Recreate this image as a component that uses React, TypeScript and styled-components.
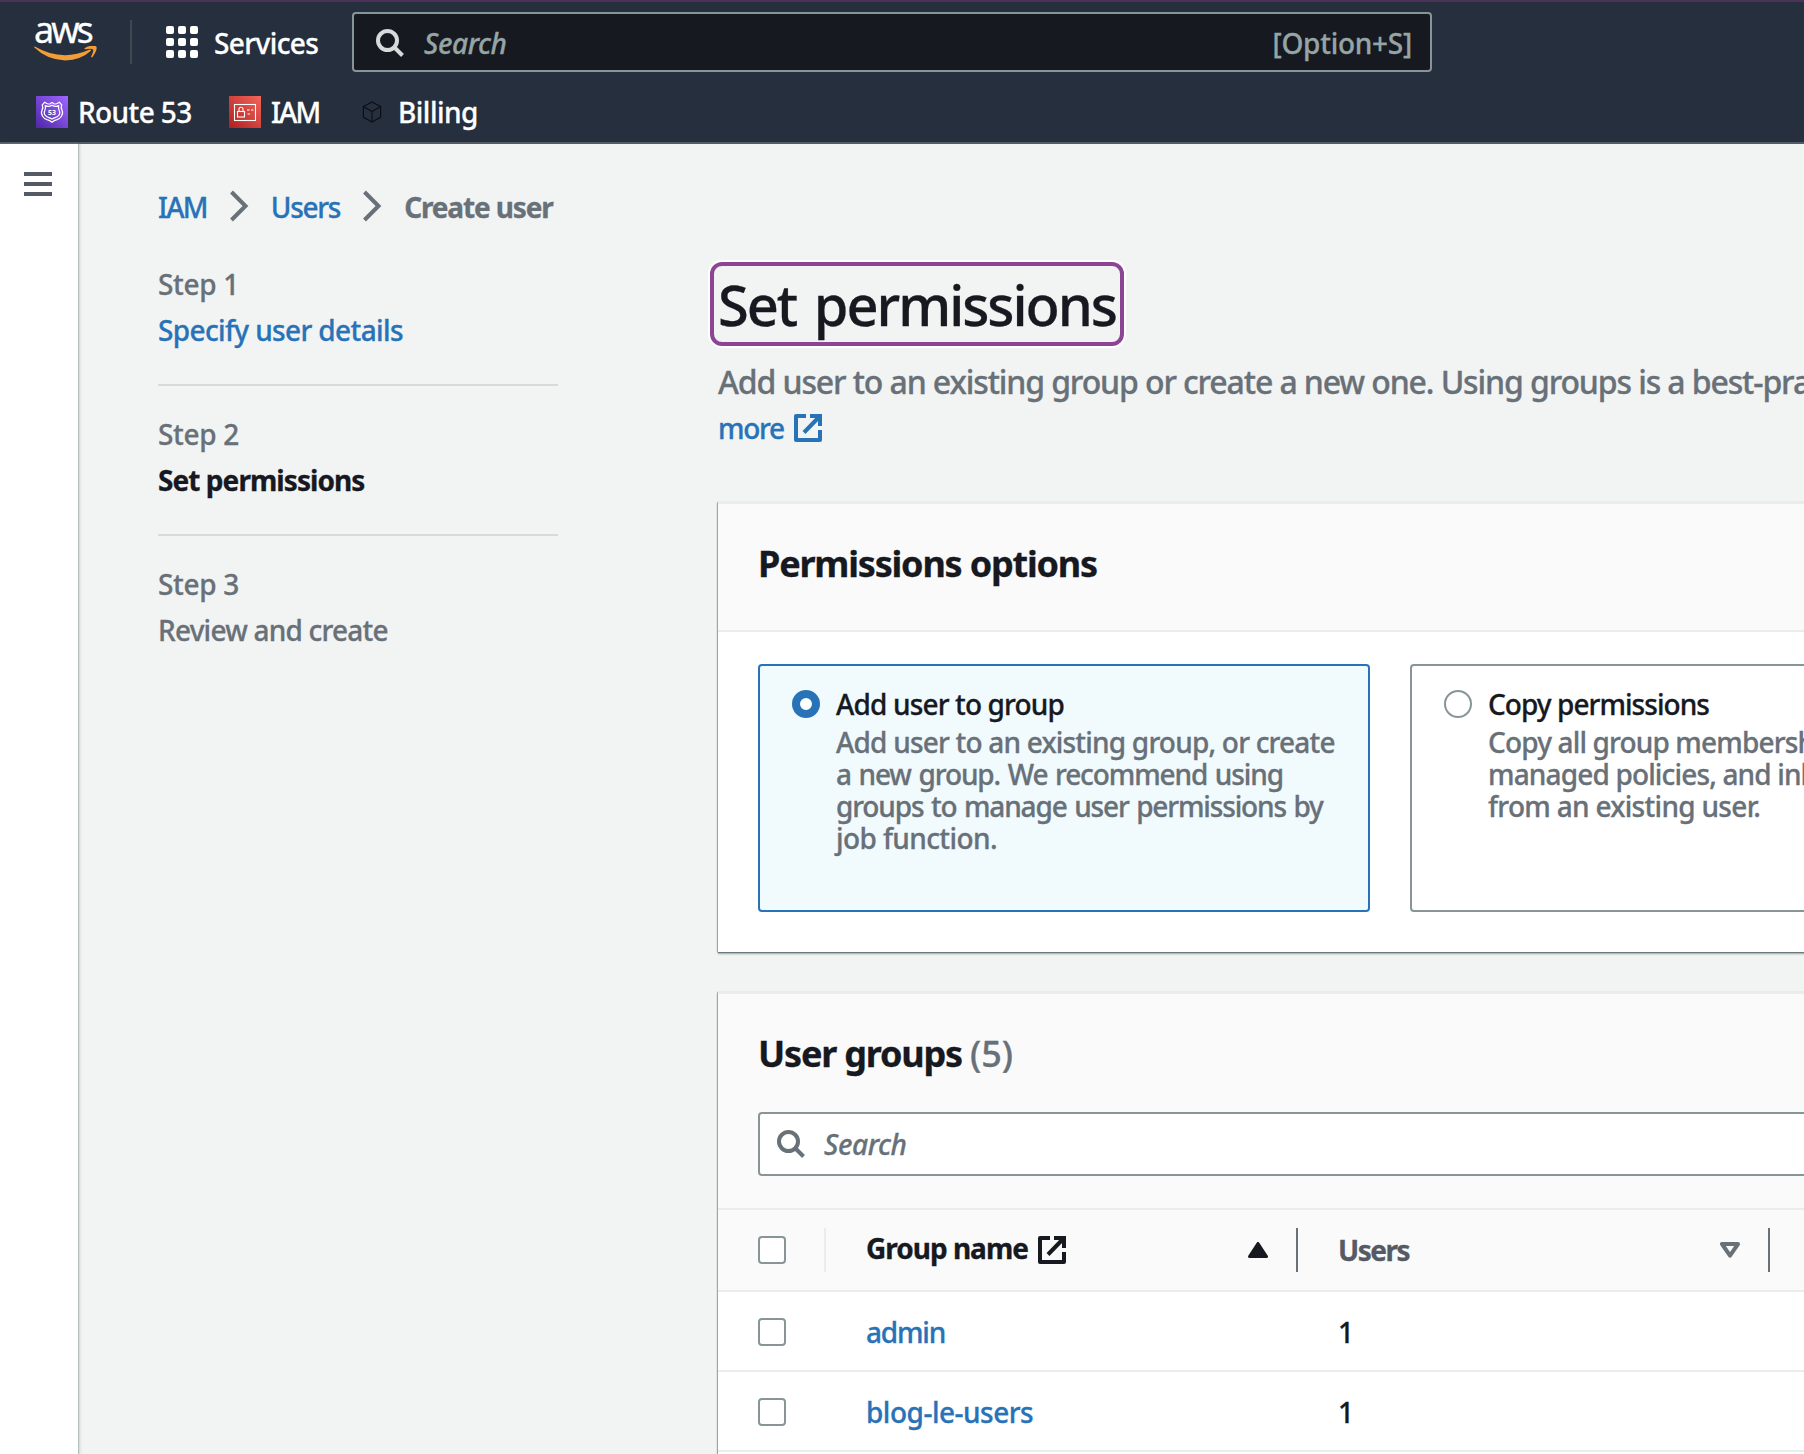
import React from "react";
import styled, { createGlobalStyle } from "styled-components";

const GlobalStyle = createGlobalStyle`
  *, *::before, *::after { box-sizing: border-box; }
  html, body { margin: 0; padding: 0; overflow: hidden; }
  body {
    font-family: "Noto Sans", "Open Sans", sans-serif;
    font-size: 28px;
    font-weight: 500;
    letter-spacing: -0.6px;
    -webkit-text-stroke-width: 0.3px;
    color: #16191f;
    background: #f2f3f3;
  }
  h1, h2, p, ol, ul { margin: 0; padding: 0; list-style: none; font-weight: inherit; }
`;

const Shell = styled.div`
  width: 1804px;
  height: 1454px;
  display: flex;
  flex-direction: column;
  overflow: hidden;
`;

/* Text run with its own tracking, in pixels. */
const Tracked = styled.span<{ $ls: number }>`
  letter-spacing: ${(p) => p.$ls}px;
`;

/* ---------- global navigation ---------- */

const Header = styled.header`
  flex: none;
  height: 144px;
  display: flex;
  flex-direction: column;
  background: #252f3e;
  color: #fff;
  border-top: 2px solid #4b305a;
  border-bottom: 2px solid #545b64;
`;

const NavRow = styled.div`
  display: flex;
  align-items: center;
  height: 80px;
  padding-left: 34px;
`;

const Logo = styled.div`
  width: 64px;
  height: 44px;
  display: flex;
  flex-direction: column;
`;

const LogoWord = styled.span`
  font-size: 36px;
  font-weight: 400;
  line-height: 19px;
  height: 26px;
  letter-spacing: -3px;
`;

const Smile = styled.svg`
  display: block;
  width: 64px;
  height: 16px;
`;

const NavDivider = styled.span`
  width: 2px;
  height: 44px;
  margin: 0 34px 0 32px;
  background: #414750;
`;

const AppGrid = styled.span`
  display: grid;
  grid-template-columns: repeat(3, 8px);
  grid-auto-rows: 8px;
  gap: 4px;
`;

const GridDot = styled.i`
  background: #fff;
  border-radius: 2px;
`;

const ServicesLabel = styled.span`
  width: 138px;
  margin: 1px 0 0 16px;
  line-height: 40px;
`;

const NavSearch = styled.div`
  width: 1080px;
  height: 60px;
  display: flex;
  align-items: center;
  padding: 1px 18px 0 22px;
  border: 2px solid #879596;
  border-radius: 4px;
  background: #16191f;
  color: #95a5a6;
`;

const Placeholder = styled.span<{ $gap: number }>`
  flex: 1;
  margin-left: ${(p) => p.$gap}px;
  font-style: italic;
  line-height: 40px;
  letter-spacing: -0.4px;
`;

const Favorites = styled.nav`
  display: flex;
  height: 60px;
  padding: 14px 0 0 36px;
`;

const Favorite = styled.div<{ $gap: number; $width: number }>`
  display: flex;
  align-items: center;
  gap: ${(p) => p.$gap}px;
  width: ${(p) => p.$width}px;
  height: 32px;
  line-height: 36px;

  svg { display: block; }
`;

/* ---------- page frame ---------- */

const Frame = styled.div`
  flex: 1;
  display: flex;
  min-height: 0;
`;

const Rail = styled.aside`
  flex: none;
  width: 78px;
  padding: 28px 0 0 24px;
  background: #fff;
  box-shadow: 1px 0 1px #b5bfbf, 2px 0 3px rgba(0, 28, 36, 0.12);
`;

const MenuButton = styled.div`
  display: flex;
  flex-direction: column;
  gap: 6px;
  width: 28px;
`;

const MenuBar = styled.i`
  height: 4px;
  background: #545b64;
`;

const Page = styled.main`
  flex: 1;
  min-width: 0;
  padding: 42px 0 0 80px;
`;

const Breadcrumbs = styled.nav`
  display: flex;
  align-items: center;
  height: 40px;
  line-height: 40px;

  a, span { padding-top: 1px; }
  svg { display: block; margin: 0 22px; }
`;

const Link = styled.a<{ $ls?: number }>`
  color: #2872b8;
  letter-spacing: ${(p) => p.$ls ?? -0.6}px;
`;

const Current = styled.span`
  color: #687078;
  font-weight: 700;
  letter-spacing: -1.15px;
`;

const Columns = styled.div`
  display: grid;
  grid-template-columns: 400px 1160px;
  column-gap: 160px;
`;

const Steps = styled.ol`
  padding-top: 38px;
`;

const Step = styled.li`
  height: 150px;
  display: flex;
  flex-direction: column;
  gap: 6px;
  line-height: 40px;
  color: #687078;

  &:not(:last-child)::after {
    content: "";
    height: 2px;
    margin-top: 28px;
    background: #d5dbdb;
  }
`;

const ActiveStep = styled.span`
  color: #16191f;
  font-weight: 700;
  letter-spacing: -0.93px;
`;

/* ---------- main column ---------- */

const Content = styled.section`
  padding-top: 36px;
`;

const Title = styled.h1`
  width: 414px;
  height: 84px;
  margin-left: -8px;
  padding-left: 4px;
  border: 4px solid #8c4594;
  border-radius: 12px;
  box-shadow: 0 0 0 2px #fff;
  font-size: 56px;
  line-height: 76px;
  letter-spacing: -2.05px;
  word-spacing: 5px;
  white-space: nowrap;
`;

const Description = styled.p`
  margin-top: 14px;
  font-size: 32px;
  line-height: 44px;
  letter-spacing: -1.12px;
  color: #687078;
  white-space: nowrap;
`;

const LearnMore = styled.div`
  display: flex;
  align-items: center;
  gap: 10px;
  height: 44px;
  margin-top: 2px;
  line-height: 42px;
`;

const Panel = styled.section<{ $top: number }>`
  margin-top: ${(p) => p.$top}px;
  border-top: 2px solid #eaeded;
  background: #fff;
  box-shadow: 0 1px 1px #687a7c, 0 2px 2px rgba(0, 28, 36, 0.3), -1px 0 1px #b8bec2;
`;

const PanelHead = styled.header<{ $height: number }>`
  height: ${(p) => p.$height}px;
  padding: 38px 0 0 40px;
  background: #fafafa;
  border-bottom: 2px solid #eaeded;
`;

const PanelTitle = styled.h2`
  font-size: 36px;
  font-weight: 700;
  line-height: 44px;
  letter-spacing: -1.2px;
`;

const Count = styled.span`
  font-weight: 500;
  letter-spacing: 0;
  color: #687078;
`;

const Tiles = styled.div`
  display: flex;
  gap: 40px;
  padding: 32px 40px 40px;
`;

const Tile = styled.div<{ $selected?: boolean }>`
  flex: none;
  width: 612px;
  height: 248px;
  display: flex;
  gap: 16px;
  padding: 24px 24px 0 32px;
  border: 2px solid ${(p) => (p.$selected ? "#2872b8" : "#879596")};
  border-radius: 4px;
  background: ${(p) => (p.$selected ? "#f1fafd" : "#fff")};
`;

const Radio = styled.span<{ $checked?: boolean }>`
  flex: none;
  width: 28px;
  height: 28px;
  border: ${(p) => (p.$checked ? "8px solid #2872b8" : "2px solid #879596")};
  border-radius: 50%;
  background: #fff;
`;

const TileText = styled.div`
  white-space: nowrap;
`;

const TileTitle = styled.div<{ $ls: number }>`
  height: 36px;
  line-height: 28px;
  letter-spacing: ${(p) => p.$ls}px;
`;

const TileLine = styled.div<{ $ls: number; $ws?: number }>`
  line-height: 32px;
  letter-spacing: ${(p) => p.$ls}px;
  word-spacing: ${(p) => p.$ws ?? 0}px;
  color: #687078;
`;

const FilterBox = styled.div`
  display: flex;
  align-items: center;
  height: 64px;
  margin-top: 36px;
  padding-left: 17px;
  border: 2px solid #879596;
  border-radius: 4px;
  background: #fff;
  color: #687078;
`;

const Row = styled.div<{ $head?: boolean }>`
  display: grid;
  grid-template-columns: 108px 472px 472px 1fr;
  align-items: center;
  height: ${(p) => (p.$head ? 82 : 80)}px;
  padding-top: ${(p) => (p.$head ? 0 : 2)}px;
  border-bottom: 2px solid #eaeded;
  background: ${(p) => (p.$head ? "#fafafa" : "#fff")};
`;

const Cell = styled.div<{ $left: number; $rule?: string }>`
  display: flex;
  align-items: center;
  height: 44px;
  line-height: 36px;
  padding-left: ${(p) => p.$left}px;
  border-right: ${(p) => (p.$rule ? `2px solid ${p.$rule}` : "none")};
`;

const Checkbox = styled.span`
  width: 28px;
  height: 28px;
  border: 2px solid #879596;
  border-radius: 4px;
  background: #fff;
`;

const ColumnName = styled.span<{ $color: string; $drop: number; $ls: number }>`
  margin: ${(p) => p.$drop}px 10px 0 0;
  font-weight: 700;
  letter-spacing: ${(p) => p.$ls}px;
  color: ${(p) => p.$color};
`;

const Caret = styled.svg`
  display: block;
  width: 20px;
  height: 16px;
  margin: 0 28px 0 auto;
`;

/* ---------- icons ---------- */

const SearchIcon = ({ color }: { color: string }) => (
  <svg width="28" height="30" viewBox="0 0 28 30" fill="none" stroke={color} strokeWidth="4">
    <circle cx="11.5" cy="12.5" r="9.5" />
    <path d="M18 19L26.5 27.5" />
  </svg>
);

const Chevron = () => (
  <svg width="20" height="32" viewBox="0 0 20 32" fill="none" stroke="#687078" strokeWidth="4">
    <path d="M2.5 2L16.5 16L2.5 30" />
  </svg>
);

const ExternalIcon = ({ color }: { color: string }) => (
  <svg width="28" height="28" viewBox="0 0 28 28" fill="none" stroke={color} strokeWidth="4">
    <path d="M12 2H2V26H26V16" strokeLinejoin="round" />
    <path d="M16 2H26V12M26 2L10 18.5" />
  </svg>
);

const Route53Icon = () => (
  <svg width="32" height="32" viewBox="0 0 32 32">
    <defs>
      <linearGradient id="r53" x1="0" y1="1" x2="1" y2="0">
        <stop offset="0" stopColor="#4d27a8" />
        <stop offset="1" stopColor="#a166ff" />
      </linearGradient>
    </defs>
    <rect width="32" height="32" fill="url(#r53)" />
    <g fill="none" stroke="#fff" strokeWidth="1.2" strokeLinejoin="round">
      <path d="M16 6.5L14 7.8Q11 8.6 8.8 6.2L6.2 9Q7.6 11.5 6 14.2Q4.6 17 6.6 20.2Q8 22.6 11 23.6Q14 24.4 16 26.2Q18 24.4 21 23.6Q24 22.6 25.4 20.2Q27.4 17 26 14.2Q24.4 11.5 25.8 9L23.2 6.2Q21 8.6 18 7.8Z" />
      <path d="M16 9.2Q12.5 11.4 9.2 9.6Q10 12 8.8 14.6Q7.4 17.4 9.2 19.4Q10.6 21 13 21.6Q15 22.2 16 23.2Q17 22.2 19 21.6Q21.4 21 22.8 19.4Q24.6 17.4 23.2 14.6Q22 12 22.8 9.6Q19.5 11.4 16 9.2Z" />
    </g>
    <text x="16" y="18.8" fill="#fff" fontSize="7" fontWeight="700" textAnchor="middle" letterSpacing="0">53</text>
  </svg>
);

const IamIcon = () => (
  <svg width="32" height="32" viewBox="0 0 32 32">
    <defs>
      <linearGradient id="iam" x1="0" y1="1" x2="1" y2="0">
        <stop offset="0" stopColor="#b0201f" />
        <stop offset="1" stopColor="#f4655b" />
      </linearGradient>
    </defs>
    <rect width="32" height="32" fill="url(#iam)" />
    <g fill="none" stroke="#fff" strokeWidth="1.1">
      <rect x="5.5" y="8.5" width="21" height="16" />
      <rect x="8.5" y="15.5" width="7" height="5.5" />
      <path d="M10 15.5V13.3Q10 11.3 12 11.3Q14 11.3 14 13.3V15.5M18 14H20.6M22 14H24.4M18.6 18H21" />
    </g>
  </svg>
);

const CubeIcon = () => (
  <svg width="20" height="22" viewBox="0 0 20 22" fill="none" stroke="#0b0f14" strokeWidth="1.1" strokeLinejoin="round">
    <path d="M10 1L18.6 5.6V16.2L10 21L1.4 16.2V5.6ZM1.4 5.6L10 10.4L18.6 5.6M10 10.4V21" />
  </svg>
);

const groups = [
  { name: "admin", users: 1, ls: -1.2 },
  { name: "blog-le-users", users: 1, ls: -0.5 },
];

export default function App() {
  return (
    <Shell>
      <GlobalStyle />
      <Header>
        <NavRow>
          <Logo>
            <LogoWord>aws</LogoWord>
            <Smile viewBox="0 0 64 16" fill="#f29d38">
              <path d="M0.4 1.6Q-0.4 0.2 1.4 0.8Q15 9 31 9.2Q43 9.2 55.2 3.8Q57.8 3 56.6 5Q47 14 31 14.4Q13 14 0.4 1.6Z" />
              <path d="M50.6 2.2Q56 -1.4 62 0.2Q64.4 2.6 58.6 11Q57 12 57.2 10.4Q60 4.4 59 3.4Q57.6 2.4 51.6 3.2Q50 3.2 50.6 2.2Z" />
            </Smile>
          </Logo>
          <NavDivider />
          <AppGrid>
            {Array.from({ length: 9 }, (_, i) => <GridDot key={i} />)}
          </AppGrid>
          <ServicesLabel>Services</ServicesLabel>
          <NavSearch>
            <SearchIcon color="#d5dbdb" />
            <Placeholder $gap={20}>Search</Placeholder>
            <Tracked $ls={-0.26}>[Option+S]</Tracked>
          </NavSearch>
        </NavRow>
        <Favorites>
          <Favorite $gap={10} $width={193}><Route53Icon /><span>Route 53</span></Favorite>
          <Favorite $gap={10} $width={133}><IamIcon /><Tracked $ls={-1.9}>IAM</Tracked></Favorite>
          <Favorite $gap={16} $width={130}><CubeIcon /><Tracked $ls={-0.5}>Billing</Tracked></Favorite>
        </Favorites>
      </Header>

      <Frame>
        <Rail>
          <MenuButton><MenuBar /><MenuBar /><MenuBar /></MenuButton>
        </Rail>
        <Page>
          <Breadcrumbs>
            <Link $ls={-1.7}>IAM</Link>
            <Chevron />
            <Link $ls={-1.3}>Users</Link>
            <Chevron />
            <Current>Create user</Current>
          </Breadcrumbs>

          <Columns>
            <Steps>
              <Step><Tracked $ls={-0.3}>Step 1</Tracked><Link $ls={-0.63}>Specify user details</Link></Step>
              <Step><Tracked $ls={-0.3}>Step 2</Tracked><ActiveStep>Set permissions</ActiveStep></Step>
              <Step><Tracked $ls={-0.3}>Step 3</Tracked><Tracked $ls={-0.78}>Review and create</Tracked></Step>
            </Steps>

            <Content>
              <Title>Set permissions</Title>
              <Description>
                Add user to an existing group or create a new one. Using groups is a best-practice
              </Description>
              <LearnMore>
                <Link $ls={-1.3}>more</Link>
                <ExternalIcon color="#2872b8" />
              </LearnMore>

              <Panel $top={52}>
                <PanelHead $height={128}>
                  <PanelTitle>Permissions options</PanelTitle>
                </PanelHead>
                <Tiles>
                  <Tile $selected>
                    <Radio $checked />
                    <TileText>
                      <TileTitle $ls={-0.85}>Add user to group</TileTitle>
                      <TileLine $ls={-0.8}>Add user to an existing group, or create</TileLine>
                      <TileLine $ls={-1.1} $ws={1.4}>a new group. We recommend using</TileLine>
                      <TileLine $ls={-1.15} $ws={1.4}>groups to manage user permissions by</TileLine>
                      <TileLine $ls={-0.6}>job function.</TileLine>
                    </TileText>
                  </Tile>
                  <Tile>
                    <Radio />
                    <TileText>
                      <TileTitle $ls={-0.95}>Copy permissions</TileTitle>
                      <TileLine $ls={-0.85}>Copy all group memberships</TileLine>
                      <TileLine $ls={-0.85}>managed policies, and inline</TileLine>
                      <TileLine $ls={-0.7}>from an existing user.</TileLine>
                    </TileText>
                  </Tile>
                </Tiles>
              </Panel>

              <Panel $top={40}>
                <PanelHead $height={216}>
                  <PanelTitle>User groups <Count>(5)</Count></PanelTitle>
                  <FilterBox>
                    <SearchIcon color="#687078" />
                    <Placeholder $gap={19}>Search</Placeholder>
                  </FilterBox>
                </PanelHead>
                <Row $head>
                  <Cell $left={40} $rule="#eaeded"><Checkbox /></Cell>
                  <Cell $left={40} $rule="#687078">
                    <ColumnName $color="#16191f" $drop={-4} $ls={-1}>Group name</ColumnName>
                    <ExternalIcon color="#16191f" />
                    <Caret viewBox="0 0 20 16">
                      <path d="M10 1.5L18.5 14.5H1.5Z" fill="#16191f" stroke="#16191f" strokeWidth="3" strokeLinejoin="round" />
                    </Caret>
                  </Cell>
                  <Cell $left={40} $rule="#687078">
                    <ColumnName $color="#545b64" $drop={0} $ls={-1.5}>Users</ColumnName>
                    <Caret viewBox="0 0 20 16">
                      <path d="M2 2H18L10 13.6Z" fill="none" stroke="#687078" strokeWidth="4" strokeLinejoin="round" />
                    </Caret>
                  </Cell>
                </Row>
                {groups.map((g) => (
                  <Row key={g.name}>
                    <Cell $left={40}><Checkbox /></Cell>
                    <Cell $left={40}><Link $ls={g.ls}>{g.name}</Link></Cell>
                    <Cell $left={40}>{g.users}</Cell>
                  </Row>
                ))}
                <Row />
              </Panel>
            </Content>
          </Columns>
        </Page>
      </Frame>
    </Shell>
  );
}
